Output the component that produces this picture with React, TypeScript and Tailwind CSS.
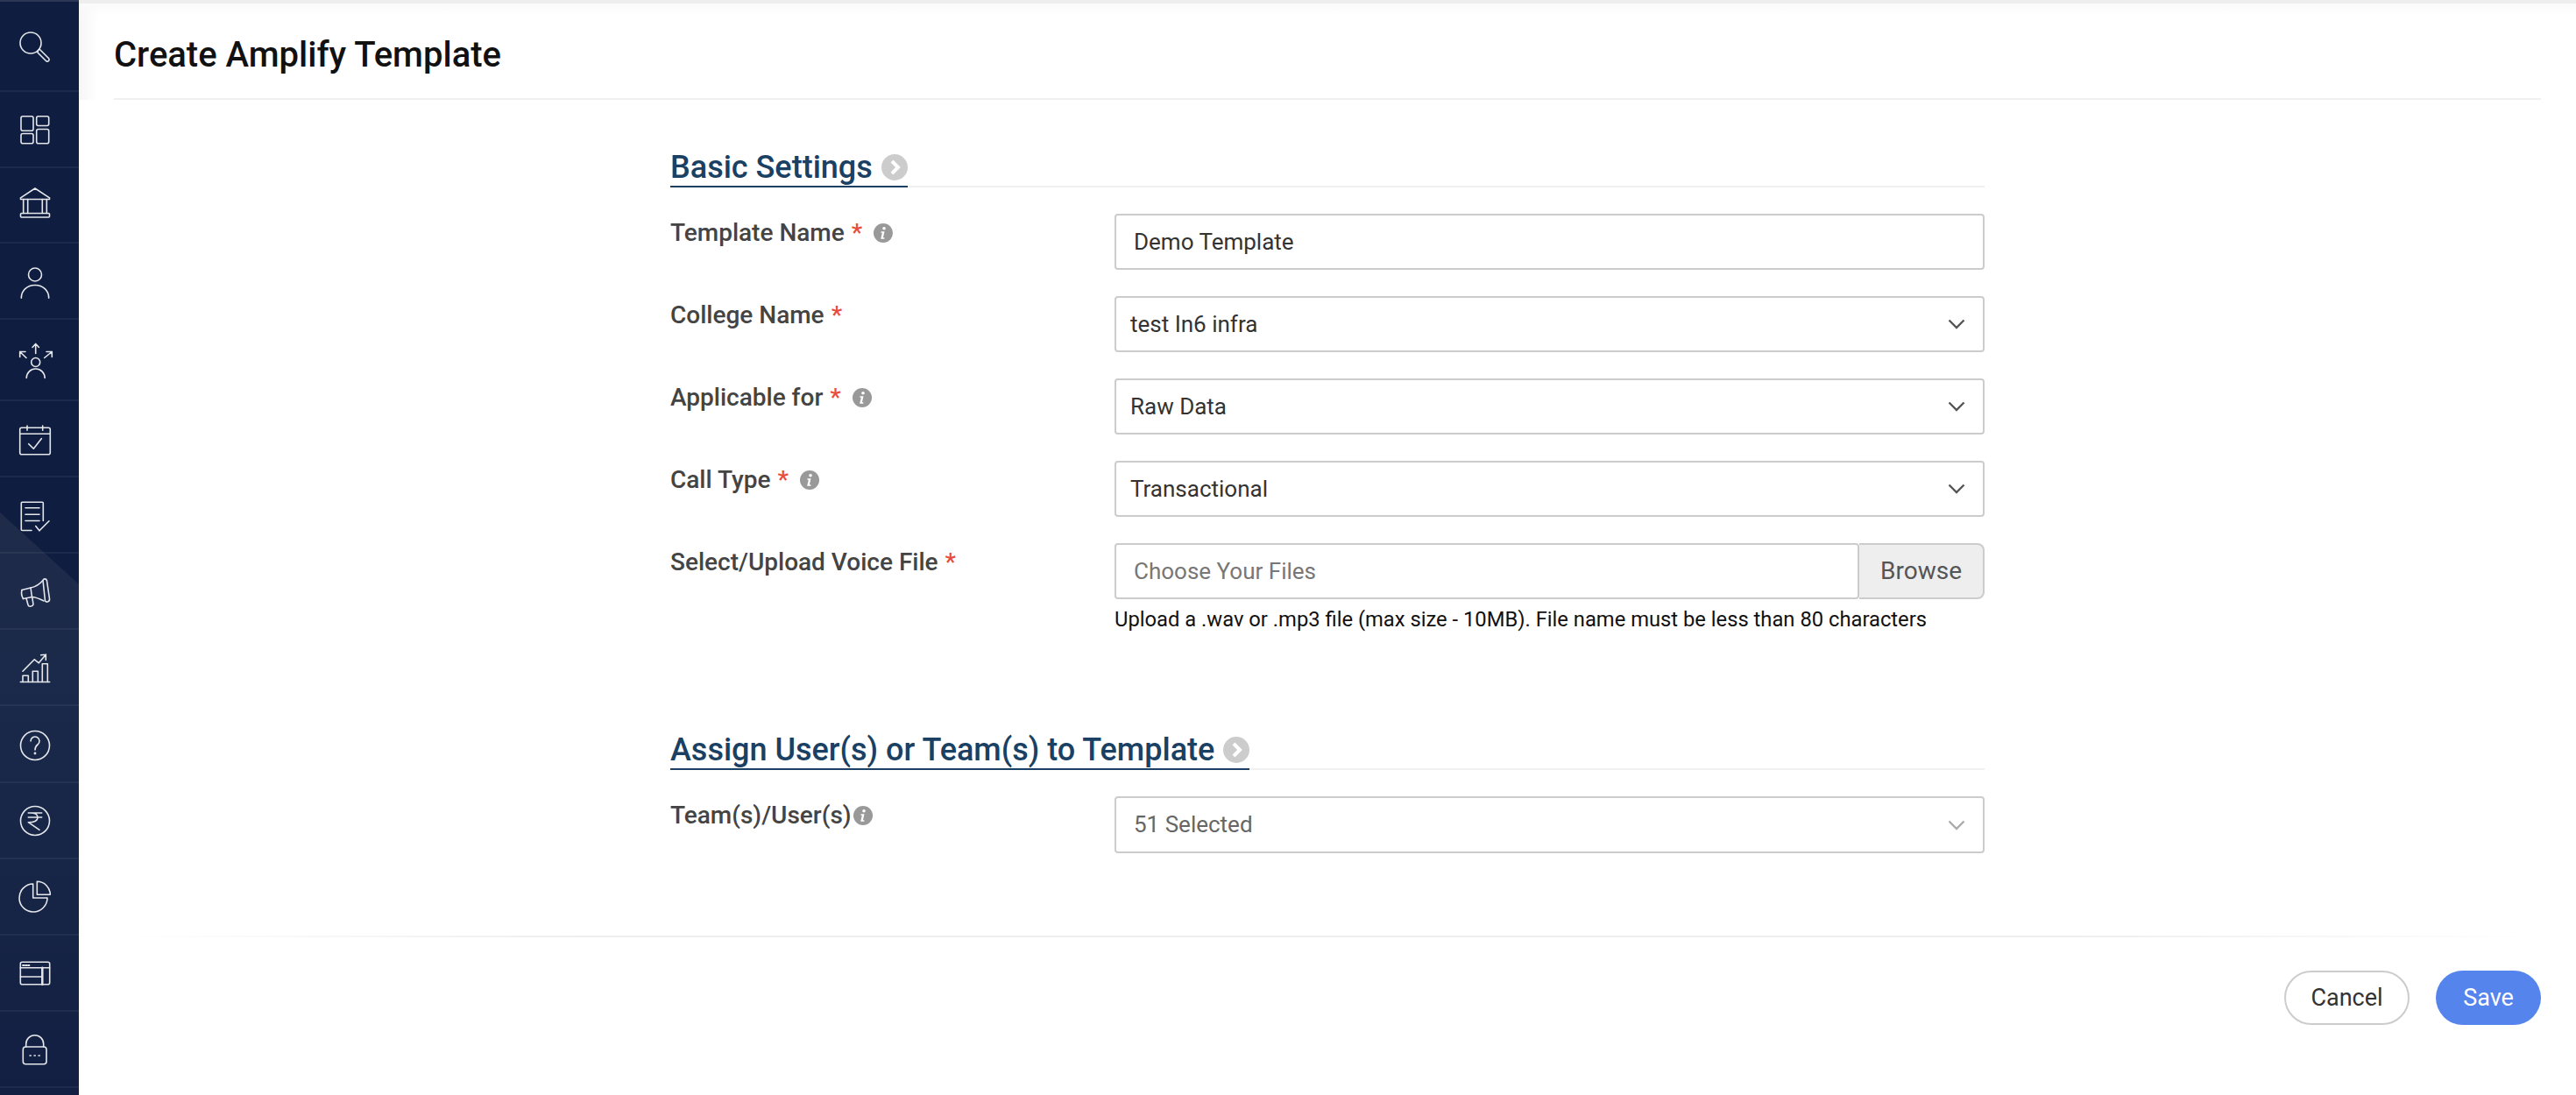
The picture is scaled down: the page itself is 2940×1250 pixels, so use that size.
import React from 'react';

const NAV_ICONS = [
    // search
    <>
        <circle cx="15" cy="16" r="12" />
        <path d="M23.5 24.5l1.5-1.5 10.5 10.5a2 2 0 0 1-3 3L23 27z" />
    </>,
    // dashboard
    <>
        <rect x="4" y="4.3" width="14" height="16.4" rx="2" />
        <rect x="21.7" y="4.3" width="14" height="10.7" rx="2" />
        <rect x="4" y="24" width="14" height="11.3" rx="2" />
        <rect x="21.7" y="19" width="14" height="16.3" rx="2" />
    </>,
    // college
    <>
        <path d="M3.5 16.5v-1.7L20 4l16.5 10.8v1.7z" />
        <path d="M6.7 16.5v16M11.7 16.5v16M28.3 16.5v16M33.3 16.5v16" />
        <rect x="3.5" y="32.5" width="33" height="4.5" rx="1" />
    </>,
    // user
    <>
        <circle cx="20" cy="11" r="7.5" />
        <path d="M4.3 37.7C4.3 29 11 23 20 23s15.7 6 15.7 14.7" />
    </>,
    // network
    <>
        <path d="M20.7 1v11M17 5l3.7-4 3.7 4" />
        <path d="M10 17l-7.3-7M2.7 16v-6H9" />
        <path d="M30.7 17l8.6-7M33 10h6.3v6" />
        <circle cx="20.7" cy="22" r="5" />
        <path d="M10.2 40a10.5 10.5 0 0 1 21 0" />
    </>,
    // calendar
    <>
        <rect x="2.7" y="6.3" width="34.6" height="30.4" rx="2" />
        <path d="M2.7 13.3h34.6M11 4v5.3M28.7 4v5.3" />
        <path d="M12.7 24.7l5.6 5.6 9-11.6" />
    </>,
    // tasks
    <>
        <path d="M16 36H5.3a1 1 0 0 1-1-1V4.7a1 1 0 0 1 1-1h23a1 1 0 0 1 1 1V25" />
        <path d="M9 10.3h16M9 17.7h16M9 25h16" />
        <path d="M20.7 31l4.3 5.3 11-11" />
    </>,
    // megaphone
    <>
        <path d="M5 16.5L15 14c5-1 11-5 14-8.5" />
        <path d="M6.5 26.5C5 24 4 20 5 16.5" />
        <path d="M6.5 26.500l10-2c4.500 0 9.500 2.500 13.500 4.500" />
        <path d="M15 14l1.500 10.500" />
        <path d="M29 5.500c1-2.500 4-2 4.500.5l3 20.500c.5 3.500-3.500 4.500-5 2.500z" />
        <path d="M10 26l2 7.500c.5 2.500 5 2.500 6-.5l-1.200-8" />
    </>,
    // analytics
    <>
        <path d="M3.300 35h33.400" />
        <path d="M6 35v-7.300h6.300V35M17.300 35V22.700h6V35M28.300 35V14.300h6V35" />
        <path d="M6 22.700L19.300 9.300l5 4 8-9.600M26.700 4.300l5.600-.6V10" />
    </>,
    // help
    <>
        <circle cx="20" cy="20" r="16.500" />
        <path d="M15 15a5 5 0 1 1 8 4c-2 1.500-3 3-3 6" />
        <circle cx="20" cy="29" r="0.600" />
    </>,
    // fees
    <>
        <circle cx="20" cy="20" r="16.500" />
        <path d="M12.300 11h15.400M12.300 16h15.400M15 11c5 0 8 1.500 8 5.200s-3 5.500-10.700 5.500L25 30.300" />
    </>,
    // reports
    <>
        <path d="M22.300 3.300v15h15a15 15 0 0 0-15-15z" />
        <path d="M17.700 6v16H34A16 16 0 1 1 17.700 6z" />
    </>,
    // layout
    <>
        <rect x="3.300" y="7.300" width="33.400" height="25.400" rx="2" />
        <path d="M3.300 13.700h33.400M3.300 24h25" />
        <path d="M28.300 13.700v19" strokeWidth="2.500" />
        <path d="M6 11h1.500M9 11h1.500M12 11h1.500" strokeWidth="1.800" />
    </>,
    // lock
    <>
        <rect x="6.300" y="18" width="26.700" height="19.700" rx="3" />
        <path d="M9.700 18v-3.300a10 10 0 0 1 20 0V18" />
        <path d="M14 28h1.300M19 28h1.300M24 28h1.300" strokeWidth="1.500" />
    </>,
];

// the icons don't sit exactly in the middle of their rows
const ICON_NUDGE = [0, 1.5, -3, 1.5, 0.5, 1, 1.5, 2, 1.5, 2, 1, 0, 1, 0];

const rowHeight = (idx: number) => {
    if (idx === 0) return 'h-[103px]';
    if (idx < 4) return 'h-[86.7px]';
    if (idx === 4) return 'h-[93px]';
    return 'h-[87.1px]';
};

const InfoIcon = () => (
    <svg width="22" height="22" viewBox="0 0 22 22" className="shrink-0">
        <circle cx="11" cy="11" r="11" fill="#999999" />
        <circle cx="12" cy="5.700" r="1.800" fill="#ffffff" />
        <path d="M8.500 9.300h4l-1.600 7h1.500v1.400H8.200l1.600-7H8.500z" fill="#ffffff" />
    </svg>
);

const SectionArrow = () => (
    <svg width="30" height="30" viewBox="0 0 30 30" className="shrink-0">
        <circle cx="15" cy="15" r="15" fill="#cccccc" />
        <path d="M12 8l7 7-7 7" fill="none" stroke="#ffffff" strokeWidth="4" />
    </svg>
);

const Chevron = ({ color = '#555555' }: { color?: string }) => (
    <svg width="20" height="14" viewBox="0 0 20 14" className="shrink-0">
        <path d="M1.500 2.500L10 11l8.500-8.500" fill="none" stroke={color} strokeWidth="2.400" />
    </svg>
);

const SectionHeading = ({ title }: { title: string }) => (
    <div className="border-b-2 border-[#f0f0f0]">
        <div className="inline-flex items-center gap-[10px] h-[50px] pt-[5px] -mb-[2px] border-b-2 border-[#1a4163]">
            <h2 className="text-[36px] font-medium text-[#1a4163] leading-none">{title}</h2>
            <SectionArrow />
        </div>
    </div>
);

const Label = ({ text, required, info, infoGap = 'ml-[13px]' }: { text: string; required?: boolean; info?: boolean; infoGap?: string }) => (
    <div className="w-[507px] shrink-0 flex items-center h-[42px] pt-[2px] text-[28px] font-medium text-[#444444]">
        <span>{text}</span>
        {required && <span className="ml-[8px] text-[#e74c3c]">*</span>}
        {info && <span className={infoGap}><InfoIcon /></span>}
    </div>
);

const SelectBox = ({ value, muted }: { value: string; muted?: boolean }) => (
    <div className={`flex-1 border-2 border-[#cccccc] rounded-[4px] flex items-center justify-between pr-[20px] text-[26px] ${muted ? 'h-[65px] pl-[20px] text-[#666666]' : 'h-[64px] pl-[16px] text-[#333333]'}`}>
        <span>{value}</span>
        <Chevron color={muted ? '#aaaaaa' : '#555555'} />
    </div>
);

export default function App() {
    return (
        <div className="h-[1250px] w-[2940px] flex bg-white overflow-hidden font-['Roboto',sans-serif]">
            {/* Sidebar */}
            <aside className="relative w-[90px] shrink-0 bg-[#0f1e40] border-t-2 border-[#2a3654]">
                <div className="absolute inset-0 bg-[linear-gradient(to_bottom,#1f2b49_585px,#1a294a_800px,#121f42_1250px)] [clip-path:polygon(0_583px,90px_665px,90px_100%,0_100%)]" />
                <div className="relative flex flex-col">
                    {NAV_ICONS.map((icon, idx) => (
                        <div key={idx} className={`flex items-center pl-[20px] border-b-2 border-white/5 ${rowHeight(idx)}`}>
                            <svg width="40" height="40" viewBox="0 0 40 40" fill="none" stroke="#e4e6ea" strokeWidth="1.600" strokeLinecap="round" strokeLinejoin="round" className="overflow-visible">
                                <g transform={`translate(0 ${ICON_NUDGE[idx]})`}>{icon}</g>
                            </svg>
                        </div>
                    ))}
                </div>
            </aside>

            {/* Main */}
            <main className="relative flex-1 flex flex-col border-t-[4px] border-[#eeeeee]">
                <div className="absolute left-0 top-0 w-[22px] h-[110px] bg-gradient-to-r from-[#f6f6f6] to-transparent" />
                <div className="absolute left-0 right-0 top-0 h-[14px] bg-gradient-to-b from-[#fafafa] to-transparent" />

                <div className="mx-[40px] h-[110px] flex items-center pt-[10px] border-b-2 border-[#f0f0f0]">
                    <h1 className="text-[40px] font-medium text-[#111111] leading-none">Create Amplify Template</h1>
                </div>

                <div className="mx-auto w-[1500px] pt-[50px]">
                    <SectionHeading title="Basic Settings" />

                    <div className="flex flex-col gap-[30px] pt-[30px]">
                        <div className="flex">
                            <Label text="Template Name" required info />
                            <div className="flex-1 h-[64px] border-2 border-[#cccccc] rounded-[4px] flex items-center pl-[20px] text-[26px] text-[#333333]">
                                Demo Template
                            </div>
                        </div>
                        <div className="flex">
                            <Label text="College Name" required />
                            <SelectBox value="test In6 infra" />
                        </div>
                        <div className="flex">
                            <Label text="Applicable for" required info />
                            <SelectBox value="Raw Data" />
                        </div>
                        <div className="flex">
                            <Label text="Call Type" required info />
                            <SelectBox value="Transactional" />
                        </div>
                        <div className="flex">
                            <Label text="Select/Upload Voice File" required />
                            <div className="flex-1">
                                <div className="flex h-[64px]">
                                    <div className="flex-1 border-2 border-[#cccccc] rounded-[4px] flex items-center pl-[20px] text-[26px] text-[#777777]">
                                        Choose Your Files
                                    </div>
                                    <div className="w-[143px] bg-[#eeeeee] border-2 border-l-0 border-[#cccccc] rounded-r-[8px] flex items-center justify-center text-[28px] text-[#555555]">
                                        Browse
                                    </div>
                                </div>
                                <p className="mt-[8px] text-[23.75px] leading-[30px] text-[#111111]">
                                    Upload a .wav or .mp3 file (max size - 10MB). File name must be less than 80 characters
                                </p>
                            </div>
                        </div>
                    </div>

                    <div className="pt-[107px]">
                        <SectionHeading title="Assign User(s) or Team(s) to Template" />
                    </div>

                    <div className="flex pt-[30px]">
                        <Label text="Team(s)/User(s)" info infoGap="ml-[2px]" />
                        <SelectBox value="51 Selected" muted />
                    </div>
                </div>

                <div className="mx-[40px] mt-[94px] h-[2px] bg-[linear-gradient(to_right,transparent,#eeeeee_20%,#eeeeee_80%,transparent)]" />

                <div className="mx-[40px] pt-[38px] flex justify-end gap-[30px]">
                    <button className="w-[143px] h-[62px] rounded-full border-2 border-[#cccccc] text-[27px] text-[#333333]">Cancel</button>
                    <button className="w-[120px] h-[62px] rounded-full bg-[#5484ec] text-[27px] text-white">Save</button>
                </div>
            </main>
        </div>
    );
}
